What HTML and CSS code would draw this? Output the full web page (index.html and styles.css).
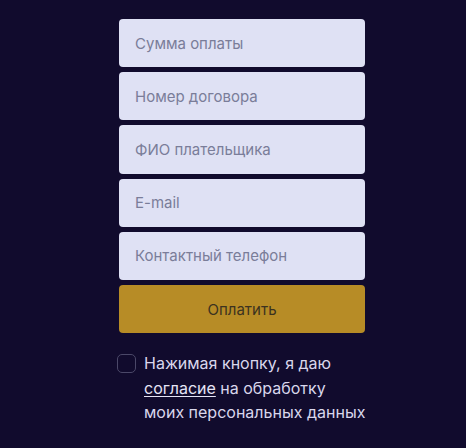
FILE: index.html
```html
<!DOCTYPE html>
<html lang="ru">
<head>
<meta charset="utf-8">
<link rel="stylesheet" href="styles.css">
</head>
<body>
<form class="pay-form">
  <div class="field">Сумма оплаты</div>
  <div class="field">Номер договора</div>
  <div class="field">ФИО плательщика</div>
  <div class="field">E-mail</div>
  <div class="field">Контактный телефон</div>
  <div class="btn">Оплатить</div>
  <label class="consent">
    <span class="box"></span>
    <span class="consent-text">Нажимая кнопку, я даю<br><a class="link">согласие</a> на обработку<br>моих персональных данных</span>
  </label>
</form>
</body>
</html>
```
FILE: styles.css
```css
html, body {
  margin: 0;
  padding: 0;
  background: #110b2d;
}
body {
  font-family: Inter, "Noto Sans", sans-serif;
  width: 466px;
  height: 448px;
  overflow: hidden;
}
.pay-form {
  width: 246px;
  margin: 19px 0 0 119px;
  display: flex;
  flex-direction: column;
  gap: 5px;
}
.field {
  height: 48.2px;
  box-sizing: border-box;
  background: #dfe1f4;
  border-radius: 4px;
  padding-left: 16px;
  display: flex;
  align-items: center;
  font-size: 15px;
  color: #7a7d99;
}
.btn {
  height: 48.2px;
  background: #b78c26;
  border-radius: 4px;
  display: flex;
  align-items: center;
  justify-content: center;
  font-size: 15px;
  color: #3b3220;
}
.consent {
  display: flex;
  align-items: flex-start;
  gap: 8px;
  margin-top: 13px;
  margin-left: -2px;
}
.box {
  flex: none;
  width: 17px;
  height: 17px;
  border: 1.5px solid #4b4868;
  border-radius: 5px;
  margin-top: 3px;
}
.consent-text {
  font-size: 16px;
  line-height: 24.5px;
  color: #d9d7ec;
  white-space: nowrap;
}
.link {
  color: #e6e4f5;
  text-decoration: underline;
  text-underline-offset: 2px;
}
```
